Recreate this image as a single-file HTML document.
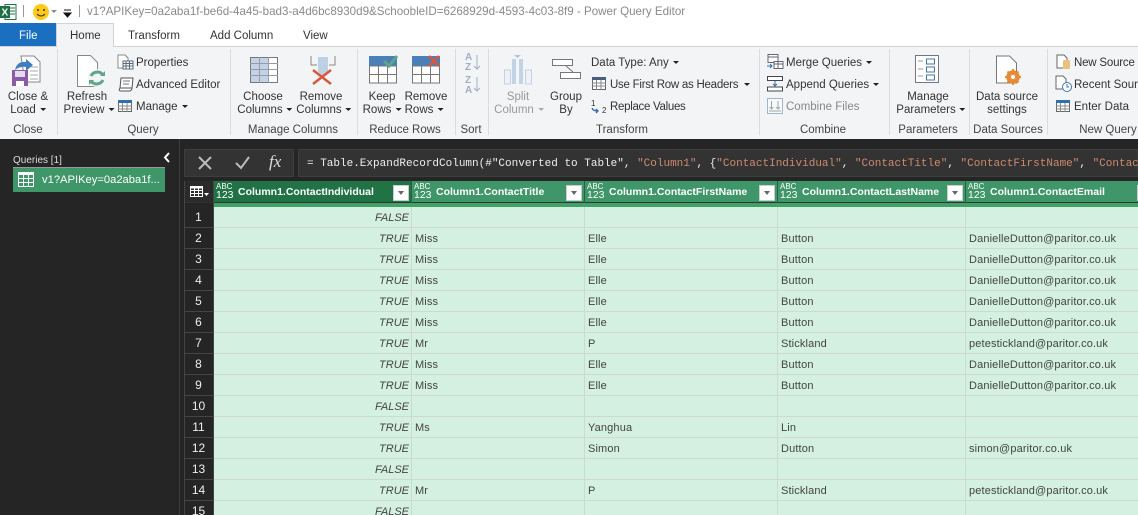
<!DOCTYPE html>
<html><head><meta charset="utf-8"><style>
html,body{margin:0;padding:0;width:1138px;height:515px;overflow:hidden;background:#252525;font-family:"Liberation Sans",sans-serif;}
#p{position:relative;width:1138px;height:515px;overflow:hidden}
.t,.b,svg{position:absolute}
.t{white-space:nowrap;font-size:11.5px;line-height:14px;color:#333}
.c{transform:translateX(-50%);text-align:center}
.g{color:#444;margin-top:1px}
.a{display:inline-block;width:0;height:0;border:3px solid transparent;border-top:3px solid #222;border-bottom:0;margin-left:4px;vertical-align:2px}
.sep{position:absolute;top:49px;height:86px;width:1px;background:#dcdcdc}
.h{position:absolute;color:#fff;font-size:10.5px;font-weight:bold;top:185px;line-height:14px;white-space:nowrap}
.abc{position:absolute;color:#fff;top:183px;font-size:8px;line-height:8px}
.n{position:absolute;color:#fff;top:190px;font-size:10.5px;line-height:10px}
.f{position:absolute;top:185px;width:16px;height:16px;background:#fff;border:1px solid #ccc;box-sizing:border-box}
.f:after{content:"";position:absolute;left:4px;top:5px;border:3px solid transparent;border-top:4px solid #666;border-bottom:0}
.rn{position:absolute;left:184px;width:29px;text-align:center;color:#eee;font-size:12px;line-height:20px;height:20px;background:#252525;border-bottom:1px solid #444}
.d{position:absolute;font-size:11px;line-height:14px;color:#444;white-space:nowrap;margin-top:1px;letter-spacing:.14px}
.i{font-style:italic;text-align:right;width:190px;left:219px;letter-spacing:0}
.q{font-family:"Liberation Mono",monospace;font-size:11px;line-height:14px;position:absolute;top:157px;white-space:pre;color:#eee}
</style></head><body><div id="p">
<!-- title bar -->
<div class="b" style="left:0;top:0;width:1138px;height:46px;background:#fff"></div>
<svg style="left:0;top:3px" width="18" height="18"><rect x="5" y="1.500" width="11" height="15" fill="#fff" stroke="#1e7145"/><path d="M10 5h5M10 8h5M10 11h5" stroke="#1e7145"/><rect x="0" y="3" width="10" height="12" fill="#1e7145"/><text x="1.500" y="12.500" font-size="10" font-weight="bold" fill="#fff" font-family="Liberation Sans">X</text></svg>
<div class="b" style="left:23px;top:5px;width:1px;height:12px;background:#999"></div>
<svg style="left:32px;top:3px" width="18" height="18"><circle cx="9" cy="9" r="8" fill="#fdc914"/><circle cx="6" cy="7" r="1" fill="#333"/><circle cx="12" cy="7" r="1" fill="#333"/><path d="M5 11q4 4 8 0" fill="none" stroke="#333"/></svg>
<div class="b" style="left:51px;top:10px;border:3px solid transparent;border-top:3px solid #888;border-bottom:0"></div>
<svg style="left:63px;top:9px" width="10" height="9"><path d="M1 1h7M1 4h7L4.500 8z" fill="#111" stroke="#111" stroke-width="1"/></svg>
<div class="b" style="left:79px;top:5px;width:1px;height:12px;background:#999"></div>
<div class="t" style="left:87px;top:5px;color:#8a8a8a;font-size:11.6px">v1?APIKey=0a2aba1f-be6d-4a45-bad3-a4d6bc8930d9&amp;SchoobleID=6268929d-4593-4c03-8f9 - Power Query Editor</div>
<!-- tabs -->
<div class="b" style="left:0;top:23px;width:56px;height:23px;background:#1a6fc0"></div>
<div class="t" style="left:19px;top:29px;color:#fff">File</div>
<div class="b" style="left:56px;top:23px;width:58px;height:24px;background:#f3f4f6;border:1px solid #d2d2d2;border-bottom:0;box-sizing:border-box;z-index:2"></div>
<div class="t" style="left:70px;top:29px;z-index:3">Home</div>
<div class="t" style="left:128px;top:29px">Transform</div>
<div class="t" style="left:210px;top:29px">Add Column</div>
<div class="t" style="left:303px;top:29px">View</div>
<!-- ribbon -->
<div class="b" style="left:0;top:46px;width:1138px;height:93px;background:#f3f4f6;border-top:1px solid #d2d2d2;box-sizing:border-box"></div>
<div class="sep" style="left:57px"></div><div class="sep" style="left:230px"></div><div class="sep" style="left:357px"></div><div class="sep" style="left:455px"></div><div class="sep" style="left:488px"></div><div class="sep" style="left:759px"></div><div class="sep" style="left:889px"></div><div class="sep" style="left:969px"></div><div class="sep" style="left:1047px"></div>
<!-- Close & Load -->
<svg style="left:11px;top:54px" width="30" height="34"><path d="M10 2h13l6 6v20H14z" fill="#fff" stroke="#888"/><path d="M19 13h8M19 17h8M19 21h8M19 25h8" stroke="#aaa"/><path d="M4 16q2-9 11-8v-3l7 6-7 6v-4q-6-1-11 3z" fill="#3f7fbf"/><rect x="1" y="16" width="16" height="16" fill="#8c5ba8"/><rect x="4" y="17" width="10" height="6" fill="#e5dcee"/><rect x="5" y="27" width="8" height="5" fill="#fff"/></svg>
<div class="t c" style="left:28px;top:90px">Close &amp;</div>
<div class="t c" style="left:28px;top:103px">Load<span class="a"></span></div>
<div class="t c g" style="left:28px;top:122px">Close</div>
<!-- Refresh -->
<svg style="left:76px;top:54px" width="30" height="34"><path d="M1.500 1.500h13l7 7v24h-20z" fill="#fff" stroke="#888"/><circle cx="21" cy="24" r="9" fill="#f3f4f6"/><path d="M15 22a7 7 0 0 1 12-1M27 26a7 7 0 0 1-12 1" fill="none" stroke="#5fa58a" stroke-width="3"/><path d="M24 22h5v-5zM18 26h-5v5z" fill="#5fa58a"/></svg>
<div class="t c" style="left:87px;top:90px">Refresh</div>
<div class="t c" style="left:89px;top:103px">Preview<span class="a"></span></div>
<svg style="left:117px;top:54px" width="17" height="16"><path d="M1 1h7l3 3v10H1z" fill="#fff" stroke="#888"/><rect x="6" y="7" width="10" height="8" fill="#fff" stroke="#5a6a7a"/><path d="M6 9.500h10M6 12h10M9 7v8M12.500 7v8" stroke="#5a6a7a"/></svg>
<div class="t" style="left:136px;top:56px">Properties</div>
<svg style="left:117px;top:77px" width="17" height="15"><path d="M4 1h12l-1 10H3zM3 11q-2 3 1 3h9q2-1 2-3" fill="#fff" stroke="#555"/><path d="M6 4h7M6 7h6" stroke="#777"/></svg>
<div class="t" style="left:136px;top:78px">Advanced Editor</div>
<svg style="left:118px;top:100px" width="14" height="12"><rect x=".5" y=".5" width="13" height="11" fill="#fff" stroke="#666"/><rect width="14" height="3" fill="#2f6fb5"/><path d="M0 6h14M0 9h14M4.500 3v9M9 3v9" stroke="#888"/></svg>
<div class="t" style="left:136px;top:100px">Manage<span class="a"></span></div>
<div class="t c g" style="left:143px;top:122px">Query</div>
<!-- Choose/Remove columns -->
<svg style="left:250px;top:57px" width="28" height="27"><rect x=".5" y=".5" width="27" height="25" fill="#fff" stroke="#777"/><rect x="1" y="1" width="18" height="24" fill="#c3d3e6"/><path d="M0 6.500h28M0 12.500h28M0 18.500h28M9.500 0v26M18.500 0v26" stroke="#99a"/></svg>
<div class="t c" style="left:263px;top:90px">Choose</div>
<div class="t c" style="left:265px;top:103px">Columns<span class="a"></span></div>
<svg style="left:310px;top:56px" width="26" height="31"><path d="M1 0v9h6M25 0v9h-6" fill="none" stroke="#888"/><rect x="8" y="1" width="10" height="15" fill="#bcd0e6"/><path d="M8 15h10l-5 7z" fill="#bcd0e6"/><path d="M3 14l18 14M21 14L3 28" stroke="#d9583b" stroke-width="2.500"/></svg>
<div class="t c" style="left:321px;top:90px">Remove</div>
<div class="t c" style="left:324px;top:103px">Columns<span class="a"></span></div>
<div class="t c g" style="left:293px;top:122px">Manage Columns</div>
<!-- Keep / Remove rows -->
<svg style="left:369px;top:55px" width="29" height="29"><rect y="1" width="28" height="10" fill="#4a7fb8"/><rect x=".5" y="11" width="27" height="17" fill="#fff" stroke="#777"/><path d="M0 19.500h28M9.500 11v17M18.500 11v17" stroke="#777"/><path d="M15 6l5 5 8-10" fill="none" stroke="#5da58c" stroke-width="3"/></svg>
<div class="t c" style="left:382px;top:90px">Keep</div>
<div class="t c" style="left:382px;top:103px">Rows<span class="a"></span></div>
<svg style="left:412px;top:55px" width="29" height="29"><rect y="1" width="28" height="10" fill="#4a7fb8"/><rect x=".5" y="11" width="27" height="17" fill="#fff" stroke="#777"/><path d="M0 19.500h28M9.500 11v17M18.500 11v17" stroke="#777"/><path d="M17 1l10 10M27 1L17 11" stroke="#d9583b" stroke-width="2.500"/></svg>
<div class="t c" style="left:426px;top:90px">Remove</div>
<div class="t c" style="left:424px;top:103px">Rows<span class="a"></span></div>
<div class="t c g" style="left:405px;top:122px">Reduce Rows</div>
<!-- Sort -->
<div class="t" style="left:465px;top:53px;color:#9fb0c4;font-size:10px;line-height:10px;font-weight:bold">A<br>Z</div>
<div class="t" style="left:465px;top:76px;color:#9fb0c4;font-size:10px;line-height:10px;font-weight:bold">Z<br>A</div>
<svg style="left:473px;top:54px" width="8" height="40"><path d="M4 1v14M1 12l3 3 3-3M4 23v14M1 34l3 3 3-3" fill="none" stroke="#9fb0c4"/></svg>
<div class="t c g" style="left:471px;top:122px">Sort</div>
<!-- Split -->
<svg style="left:504px;top:55px" width="28" height="30"><rect x=".5" y="15" width="6" height="14" fill="#eef2f8" stroke="#c3d3e6"/><rect x="21.500" y="15" width="6" height="14" fill="#eef2f8" stroke="#c3d3e6"/><rect x="8" y="4" width="4" height="25" fill="#c3d3e6"/><rect x="15" y="4" width="4" height="25" fill="#c3d3e6"/><path d="M10 0h7l-3.500 3z" fill="#b5c3d6"/></svg>
<div class="t c" style="left:518px;top:90px;color:#999">Split</div>
<div class="t c" style="left:519px;top:103px;color:#999">Column<span class="a" style="border-top-color:#aaa"></span></div>
<svg style="left:552px;top:59px" width="30" height="22"><rect x=".5" y=".5" width="20" height="6" fill="#fff" stroke="#777"/><rect x="8.500" y="13.500" width="20" height="6" fill="#fff" stroke="#777"/><path d="M14 7l7 6" stroke="#777"/></svg>
<div class="t c" style="left:566px;top:90px">Group</div>
<div class="t c" style="left:566px;top:103px">By</div>
<div class="t" style="left:591px;top:56px">Data Type: Any<span class="a"></span></div>
<svg style="left:592px;top:77px" width="14" height="13"><rect x=".5" y=".5" width="13" height="12" fill="#fff" stroke="#666"/><rect width="14" height="3" fill="#4a5f7a"/><path d="M0 6h14M0 9h14M4.500 3v10M9 3v10" stroke="#888"/></svg>
<div class="t" style="left:610px;top:78px;letter-spacing:-.25px">Use First Row as Headers<span class="a" style="margin-left:6px"></span></div>
<svg style="left:590px;top:97px" width="19" height="18"><text x="1" y="9" font-size="8" fill="#333" font-family="Liberation Sans">1</text><text x="12" y="16" font-size="8" fill="#333" font-family="Liberation Sans">2</text><path d="M2 11q1 3 6 3M6 12l2 2-2 2" fill="none" stroke="#2f6fb5" stroke-width="1.300"/></svg>
<div class="t" style="left:610px;top:100px;letter-spacing:-.3px">Replace Values</div>
<div class="t c g" style="left:622px;top:122px">Transform</div>
<!-- Combine -->
<svg style="left:767px;top:54px" width="17" height="16"><rect x="1" y=".5" width="10" height="8" fill="#fff" stroke="#667"/><rect x="7" y="7.500" width="9" height="7" fill="#fff" stroke="#667"/><path d="M1 3h10M7 10h9M11 7.500v7" stroke="#667"/><path d="M0 12h5M3 10l2 2-2 2" fill="none" stroke="#2f6fb5"/></svg>
<div class="t" style="left:786px;top:56px">Merge Queries<span class="a"></span></div>
<svg style="left:767px;top:76px" width="17" height="16"><rect x=".5" y=".5" width="15" height="4" fill="#fff" stroke="#445"/><rect x=".5" y="11" width="15" height="4" fill="#fff" stroke="#445"/><path d="M8 5v5M6 8l2 2 2-2" fill="none" stroke="#2f6fb5"/></svg>
<div class="t" style="left:786px;top:78px">Append Queries<span class="a"></span></div>
<svg style="left:767px;top:98px" width="16" height="16"><rect x=".5" y=".5" width="15" height="15" fill="#f8f9fb" stroke="#9fb6d0"/><path d="M4.500 3v8M2.500 9l2 2 2-2M11 3v8M9 9l2 2 2-2M2 13h12" fill="none" stroke="#9aa"/></svg>
<div class="t" style="left:786px;top:100px;color:#888">Combine Files</div>
<div class="t c g" style="left:823px;top:122px">Combine</div>
<!-- Parameters -->
<svg style="left:915px;top:55px" width="26" height="29"><rect x=".5" y=".5" width="23" height="27" fill="#fff" stroke="#777"/><path d="M3 6h5M3 14h5M3 21h5" stroke="#999"/><rect x="11.500" y="4" width="8" height="5" fill="#fff" stroke="#3f75ad"/><rect x="11.500" y="12" width="8" height="5" fill="#fff" stroke="#3f75ad"/><rect x="11.500" y="20" width="8" height="5" fill="#fff" stroke="#3f75ad"/></svg>
<div class="t c" style="left:928px;top:90px">Manage</div>
<div class="t c" style="left:931px;top:103px">Parameters<span class="a"></span></div>
<div class="t c g" style="left:928px;top:122px">Parameters</div>
<!-- Data source -->
<svg style="left:995px;top:55px" width="30" height="30"><path d="M1.500 1h13l7 7v20h-20z" fill="#fff" stroke="#777"/><circle cx="18" cy="22" r="5" fill="none" stroke="#e88a34" stroke-width="3.500"/><path d="M18 14v16M10 22h16M12.500 16.500l11 11M23.500 16.500l-11 11" stroke="#e88a34" stroke-width="2"/><circle cx="18" cy="22" r="2" fill="#fff"/></svg>
<div class="t c" style="left:1007px;top:90px">Data source</div>
<div class="t c" style="left:1007px;top:103px">settings</div>
<div class="t c g" style="left:1008px;top:122px">Data Sources</div>
<!-- New query -->
<svg style="left:1056px;top:54px" width="16" height="17"><path d="M1 1h7l3 3v10H1z" fill="#fff" stroke="#666"/><rect x="7" y="6" width="7" height="9" rx="1.500" fill="#e8c27d"/></svg>
<div class="t" style="left:1074px;top:56px;letter-spacing:-.2px">New Source</div>
<svg style="left:1055px;top:75px" width="18" height="18"><path d="M1 1h7l3 3v10H1z" fill="#fff" stroke="#666"/><circle cx="12" cy="12" r="4.500" fill="#fff" stroke="#3f75ad"/><path d="M12 9v3h2" fill="none" stroke="#3f75ad"/></svg>
<div class="t" style="left:1074px;top:78px">Recent Sources</div>
<svg style="left:1056px;top:100px" width="14" height="12"><rect x=".5" y=".5" width="13" height="11" fill="#fff" stroke="#666"/><rect width="14" height="3" fill="#2f6fb5"/><path d="M0 6h14M0 9h14M4.500 3v9M9 3v9" stroke="#888"/></svg>
<div class="t" style="left:1074px;top:100px">Enter Data</div>
<div class="t c g" style="left:1108px;top:122px">New Query</div>
<!-- dark area -->
<div class="b" style="left:0;top:139px;width:1138px;height:376px;background:#252525"></div>
<div class="b" style="left:179px;top:139px;width:1px;height:376px;background:#3d3d3d"></div>
<div class="t" style="left:13px;top:154px;color:#ddd;font-size:10px">Queries [1]</div>
<svg style="left:162px;top:151px" width="10" height="13"><path d="M7 2L3 6.500 7 11" fill="none" stroke="#fff" stroke-width="2"/></svg>
<div class="b" style="left:13px;top:167px;width:152px;height:25px;background:#3f9668;border-top:1px solid #999;box-sizing:border-box"></div>
<svg style="left:18px;top:172px" width="16" height="15"><rect x=".5" y=".5" width="15" height="14" fill="none" stroke="#fff"/><path d="M0 1.500h16" stroke="#fff" stroke-width="3"/><path d="M0 6.500h16M0 10.500h16M5.500 3v12M10.500 3v12" stroke="#fff"/></svg>
<div class="t" style="left:42px;top:173px;color:#fff;font-size:11.2px">v1?APIKey=0a2aba1f...</div>
<!-- formula bar -->
<div class="b" style="left:184px;top:149px;width:110px;height:28px;background:#333;border:1px solid #3e3e3e;box-sizing:border-box"></div>
<svg style="left:197px;top:155px" width="17" height="16"><path d="M2 2l12 12M14 2L2 14" stroke="#bbb" stroke-width="2"/></svg>
<svg style="left:235px;top:155px" width="16" height="15"><path d="M1 8l5 5 8-11" fill="none" stroke="#bbb" stroke-width="2"/></svg>
<div class="t" style="left:269px;top:155px;color:#ddd;font-family:'Liberation Serif',serif;font-style:italic;font-size:17px">fx</div>
<div class="b" style="left:298px;top:149px;width:840px;height:28px;background:#333;border:1px solid #3e3e3e;box-sizing:border-box"></div>
<div class="q" style="left:307px">= Table.ExpandRecordColumn(#"Converted to Table", <span style="color:#cf8a6d">"Column1"</span>, {<span style="color:#cf8a6d">"ContactIndividual"</span>, <span style="color:#cf8a6d">"ContactTitle"</span>, <span style="color:#cf8a6d">"ContactFirstName"</span>, <span style="color:#cf8a6d">"Contact</span></div>
<!-- table -->
<div class="b" style="left:214px;top:207px;width:924px;height:308px;background:#d3f0e0"></div>
<div class="b" style="left:214px;top:181px;width:197px;height:21px;background:#217346"></div>
<div class="b" style="left:412px;top:181px;width:726px;height:21px;background:#3f9668"></div>
<div class="b" style="left:214px;top:203px;width:924px;height:4px;background:#3fa266"></div>
<div class="b" style="left:184px;top:202px;width:954px;height:1px;background:#333"></div>
<div class="b" style="left:411px;top:207px;width:1px;height:308px;background:#cfd8d3"></div>
<div class="b" style="left:584px;top:207px;width:1px;height:308px;background:#cfd8d3"></div>
<div class="b" style="left:777px;top:207px;width:1px;height:308px;background:#cfd8d3"></div>
<div class="b" style="left:965px;top:207px;width:1px;height:308px;background:#cfd8d3"></div>
<div class="b" style="left:411px;top:181px;width:1px;height:22px;background:#2c5f45"></div>
<div class="b" style="left:584px;top:181px;width:1px;height:22px;background:#2c5f45"></div>
<div class="b" style="left:777px;top:181px;width:1px;height:22px;background:#2c5f45"></div>
<div class="b" style="left:965px;top:181px;width:1px;height:22px;background:#2c5f45"></div>
<div class="b" style="left:213px;top:181px;width:1px;height:334px;background:#444"></div>
<div class="b" style="left:184px;top:181px;width:29px;height:21px;background:#2b2b2b"></div>
<svg style="left:190px;top:186px" width="19" height="12"><rect x=".5" y=".5" width="12" height="10" fill="none" stroke="#fff"/><path d="M0 1.500h13" stroke="#fff" stroke-width="2"/><path d="M0 4.500h13M0 7.500h13M4.500 2v9M8.500 2v9" stroke="#fff"/><path d="M14 7h5l-2.500 3z" fill="#fff"/></svg>
<!-- header labels -->
<div class="abc" style="left:216px">ABC</div><div class="n" style="left:216px">123</div><div class="h" style="left:238px">Column1.ContactIndividual</div><div class="f" style="left:393px"></div>
<div class="abc" style="left:414px">ABC</div><div class="n" style="left:414px">123</div><div class="h" style="left:436px">Column1.ContactTitle</div><div class="f" style="left:566px"></div>
<div class="abc" style="left:587px">ABC</div><div class="n" style="left:587px">123</div><div class="h" style="left:609px">Column1.ContactFirstName</div><div class="f" style="left:759px"></div>
<div class="abc" style="left:780px">ABC</div><div class="n" style="left:780px">123</div><div class="h" style="left:802px">Column1.ContactLastName</div><div class="f" style="left:947px"></div>
<div class="abc" style="left:968px">ABC</div><div class="n" style="left:968px">123</div><div class="h" style="left:990px">Column1.ContactEmail</div><div class="f" style="left:1137px"></div>
<!-- row lines -->
<div class="b" style="left:214px;top:227px;width:924px;height:1px;background:#cfd8d3"></div>
<div class="b" style="left:214px;top:248px;width:924px;height:1px;background:#cfd8d3"></div>
<div class="b" style="left:214px;top:269px;width:924px;height:1px;background:#cfd8d3"></div>
<div class="b" style="left:214px;top:290px;width:924px;height:1px;background:#cfd8d3"></div>
<div class="b" style="left:214px;top:311px;width:924px;height:1px;background:#cfd8d3"></div>
<div class="b" style="left:214px;top:332px;width:924px;height:1px;background:#cfd8d3"></div>
<div class="b" style="left:214px;top:353px;width:924px;height:1px;background:#cfd8d3"></div>
<div class="b" style="left:214px;top:374px;width:924px;height:1px;background:#cfd8d3"></div>
<div class="b" style="left:214px;top:395px;width:924px;height:1px;background:#cfd8d3"></div>
<div class="b" style="left:214px;top:416px;width:924px;height:1px;background:#cfd8d3"></div>
<div class="b" style="left:214px;top:437px;width:924px;height:1px;background:#cfd8d3"></div>
<div class="b" style="left:214px;top:458px;width:924px;height:1px;background:#cfd8d3"></div>
<div class="b" style="left:214px;top:479px;width:924px;height:1px;background:#cfd8d3"></div>
<div class="b" style="left:214px;top:500px;width:924px;height:1px;background:#cfd8d3"></div>
<!-- row numbers -->
<div class="rn" style="top:207px">1</div><div class="rn" style="top:228px">2</div><div class="rn" style="top:249px">3</div><div class="rn" style="top:270px">4</div><div class="rn" style="top:291px">5</div><div class="rn" style="top:312px">6</div><div class="rn" style="top:333px">7</div><div class="rn" style="top:354px">8</div><div class="rn" style="top:375px">9</div><div class="rn" style="top:396px">10</div><div class="rn" style="top:417px">11</div><div class="rn" style="top:438px">12</div><div class="rn" style="top:459px">13</div><div class="rn" style="top:480px">14</div><div class="rn" style="top:501px">15</div>
<div class="b" style="left:184px;top:181px;width:1px;height:334px;background:#444"></div>
<!-- rows -->
<div class="d i" style="top:210px">FALSE</div>
<div class="d i" style="top:231px">TRUE</div><div class="d" style="left:415px;top:231px">Miss</div><div class="d" style="left:588px;top:231px">Elle</div><div class="d" style="left:781px;top:231px">Button</div><div class="d" style="left:969px;top:231px">DanielleDutton@paritor.co.uk</div>
<div class="d i" style="top:252px">TRUE</div><div class="d" style="left:415px;top:252px">Miss</div><div class="d" style="left:588px;top:252px">Elle</div><div class="d" style="left:781px;top:252px">Button</div><div class="d" style="left:969px;top:252px">DanielleDutton@paritor.co.uk</div>
<div class="d i" style="top:273px">TRUE</div><div class="d" style="left:415px;top:273px">Miss</div><div class="d" style="left:588px;top:273px">Elle</div><div class="d" style="left:781px;top:273px">Button</div><div class="d" style="left:969px;top:273px">DanielleDutton@paritor.co.uk</div>
<div class="d i" style="top:294px">TRUE</div><div class="d" style="left:415px;top:294px">Miss</div><div class="d" style="left:588px;top:294px">Elle</div><div class="d" style="left:781px;top:294px">Button</div><div class="d" style="left:969px;top:294px">DanielleDutton@paritor.co.uk</div>
<div class="d i" style="top:315px">TRUE</div><div class="d" style="left:415px;top:315px">Miss</div><div class="d" style="left:588px;top:315px">Elle</div><div class="d" style="left:781px;top:315px">Button</div><div class="d" style="left:969px;top:315px">DanielleDutton@paritor.co.uk</div>
<div class="d i" style="top:336px">TRUE</div><div class="d" style="left:415px;top:336px">Mr</div><div class="d" style="left:588px;top:336px">P</div><div class="d" style="left:781px;top:336px">Stickland</div><div class="d" style="left:969px;top:336px">petestickland@paritor.co.uk</div>
<div class="d i" style="top:357px">TRUE</div><div class="d" style="left:415px;top:357px">Miss</div><div class="d" style="left:588px;top:357px">Elle</div><div class="d" style="left:781px;top:357px">Button</div><div class="d" style="left:969px;top:357px">DanielleDutton@paritor.co.uk</div>
<div class="d i" style="top:378px">TRUE</div><div class="d" style="left:415px;top:378px">Miss</div><div class="d" style="left:588px;top:378px">Elle</div><div class="d" style="left:781px;top:378px">Button</div><div class="d" style="left:969px;top:378px">DanielleDutton@paritor.co.uk</div>
<div class="d i" style="top:399px">FALSE</div>
<div class="d i" style="top:420px">TRUE</div><div class="d" style="left:415px;top:420px">Ms</div><div class="d" style="left:588px;top:420px">Yanghua</div><div class="d" style="left:781px;top:420px">Lin</div>
<div class="d i" style="top:441px">TRUE</div><div class="d" style="left:588px;top:441px">Simon</div><div class="d" style="left:781px;top:441px">Dutton</div><div class="d" style="left:969px;top:441px">simon@paritor.co.uk</div>
<div class="d i" style="top:462px">FALSE</div>
<div class="d i" style="top:483px">TRUE</div><div class="d" style="left:415px;top:483px">Mr</div><div class="d" style="left:588px;top:483px">P</div><div class="d" style="left:781px;top:483px">Stickland</div><div class="d" style="left:969px;top:483px">petestickland@paritor.co.uk</div>
<div class="d i" style="top:504px">FALSE</div>
</div></body></html>
